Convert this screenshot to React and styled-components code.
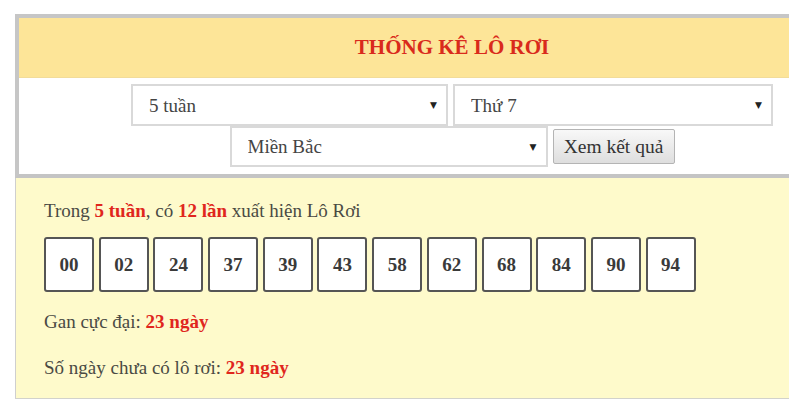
import React from "react";
import styled, { createGlobalStyle } from "styled-components";

const GlobalStyle = createGlobalStyle`
    html, body {
        margin: 0;
        padding: 0;
        background: #fff;
    }
    body {
        font-family: "Liberation Serif", "Times New Roman", serif;
        font-size: 19px;
        color: #444;
    }
`;

const Page = styled.div`
    padding: 14px 11px 0 15px;
    width: 774px;
`;

const Top = styled.div`
    border-top: 4px solid #c6c6c6;
    border-left: 4px solid #c6c6c6;
    border-bottom: 4px solid #c4c4c4;
`;

const Header = styled.div`
    height: 59px;
    background: #fde598;
    border-bottom: 1px solid #f2dc9a;
    display: flex;
    align-items: center;
    justify-content: center;
    padding-left: 96px;
`;

const Title = styled.h2`
    margin: 0;
    font-size: 21px;
    font-weight: bold;
    color: #d92a1c;
`;

const Form = styled.div`
    background: #fff;
    padding: 6px 0 7px 96px;
    display: flex;
    flex-direction: column;
    align-items: center;
`;

const Row = styled.div`
    display: flex;
    align-items: center;
    gap: 5px;
`;

const SelectWrap = styled.div`
    position: relative;
    width: ${(p) => p.$w}px;
    height: ${(p) => p.$h}px;
`;

const Select = styled.select`
    appearance: none;
    width: 100%;
    height: 100%;
    box-sizing: border-box;
    border: 2px solid #d9d9d9;
    border-radius: 0;
    background: #fff;
    padding: 0 0 0 16px;
    font-family: "Liberation Serif", serif;
    font-size: 19px;
    color: #444;
    outline: none;
`;

const Arrow = styled.span`
    position: absolute;
    right: 11px;
    top: 50%;
    transform: translateY(-50%);
    font-size: 9px;
    color: #222;
    pointer-events: none;
    font-family: "DejaVu Sans", sans-serif;
`;

const Button = styled.button`
    width: 122px;
    height: 35px;
    border: 1px solid #b4b4b4;
    border-radius: 2px;
    background: linear-gradient(#f8f8f8, #dedede);
    font-family: "Liberation Serif", serif;
    font-size: 19.5px;
    color: #333;
    padding: 0;
`;

const Panel = styled.div`
    background: #fefacb;
    border-left: 1px solid #cfcfcf;
    border-bottom: 1px solid #d2d2cc;
    padding: 22px 0 19px 28px;
`;

const Line = styled.p`
    margin: 0;
    line-height: 22px;
    color: #4a4a44;
    & + & {
        margin-top: 24px;
    }
`;

const Red = styled.b`
    color: #e0261d;
`;

const Boxes = styled.div`
    display: flex;
    gap: 4.7px;
    margin: 15px 0 19px;
`;

const Box = styled.div`
    width: 50px;
    height: 55px;
    box-sizing: border-box;
    border: 2px solid #555;
    border-radius: 3px;
    background: #fff;
    display: flex;
    align-items: center;
    justify-content: center;
    font-weight: bold;
    font-size: 19px;
    color: #3a3a3a;
`;

const numbers = ["00", "02", "24", "37", "39", "43", "58", "62", "68", "84", "90", "94"];

const Dropdown = ({ w, h, value }) => (
    <SelectWrap $w={w} $h={h}>
        <Select defaultValue={value}>
            <option>{value}</option>
        </Select>
        <Arrow>▼</Arrow>
    </SelectWrap>
);

const App = () => {
    return (
        <>
            <GlobalStyle />
            <Page>
                <Top>
                    <Header>
                        <Title>THỐNG KÊ LÔ RƠI</Title>
                    </Header>
                    <Form>
                        <Row>
                            <Dropdown w={317} h={42} value="5 tuần" />
                            <Dropdown w={320} h={42} value="Thứ 7" />
                        </Row>
                        <Row>
                            <Dropdown w={318} h={41} value="Miền Bắc" />
                            <Button>Xem kết quả</Button>
                        </Row>
                    </Form>
                </Top>
                <Panel>
                    <Line>
                        Trong <Red>5 tuần</Red>, có <Red>12 lần</Red> xuất hiện Lô Rơi
                    </Line>
                    <Boxes>
                        {numbers.map((n) => (
                            <Box key={n}>{n}</Box>
                        ))}
                    </Boxes>
                    <Line>
                        Gan cực đại: <Red>23 ngày</Red>
                    </Line>
                    <Line>
                        Số ngày chưa có lô rơi: <Red>23 ngày</Red>
                    </Line>
                </Panel>
            </Page>
        </>
    );
};

export default App;
